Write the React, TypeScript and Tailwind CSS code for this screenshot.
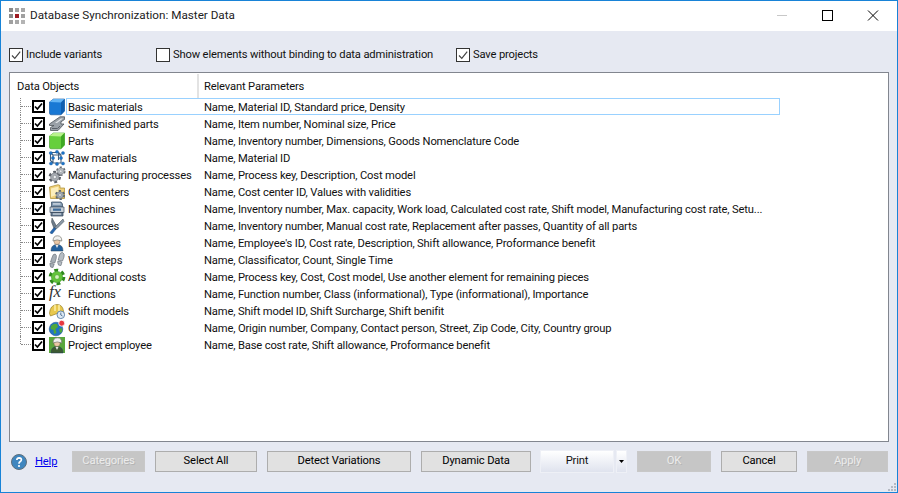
import type { ReactNode } from 'react'

function Svg({ children }: { children: ReactNode }) {
  return (
    <svg width="16" height="16" viewBox="0 0 16 16" className="block overflow-visible">
      {children}
    </svg>
  )
}

function Cube({ light, mid, dark, edge }: { light: string; mid: string; dark: string; edge: string }) {
  return (
    <Svg>
      <path d="M.5 3 L4.5 0 H15.5 V12 L12 15.8 H2 Q.5 15.8 .5 14 Z" fill={mid} stroke={edge} strokeWidth=".6" />
      <path d="M.5 3 L4.5 0 H15.5 L12 3.5 Z" fill={light} />
      <path d="M12 3.5 L15.5 0 V12 L12 15.8 Z" fill={dark} />
    </Svg>
  )
}

function GearShape({ cx, cy, r, fill, hole, stroke }: { cx: number; cy: number; r: number; fill: string; hole: string; stroke: string }) {
  return (
    <g>
      <circle cx={cx} cy={cy} r={r * 0.98} fill="none" stroke={stroke} strokeWidth={r * 0.42} strokeDasharray={`${r * 0.55} ${r * 0.5}`} />
      <circle cx={cx} cy={cy} r={r * 0.8} fill={fill} stroke={stroke} strokeWidth=".5" />
      <circle cx={cx} cy={cy} r={r * 0.32} fill={hole} stroke={stroke} strokeWidth=".4" />
    </g>
  )
}

function Person({ body, face }: { body: string; face: string }) {
  return (
    <>
      <path d="M2 16 Q2 9.5 8 9.5 Q14 9.5 14 16 Z" fill={body} stroke="#1e3c5a" strokeWidth=".5" />
      <path d="M6.5 10 L8 13 L9.5 10 Z" fill="#e8e8e8" />
      <circle cx="8" cy="6.5" r="3" fill={face} stroke="#7a5b3f" strokeWidth=".4" />
      <path d="M4 6 Q4 .8 8.5 .8 Q12.8 .8 12.8 6 Q8 3.8 4 6 Z" fill="#f1f1ef" stroke="#77776f" strokeWidth=".7" />
    </>
  )
}

const icons: Record<string, ReactNode> = {
  'Basic materials': <Cube light="#63b4f4" mid="#1878d4" dark="#0f5eb0" edge="#0d4f98" />,
  'Semifinished parts': (
    <Svg>
      <path d="M.5 8 L11 .8 H15.5 V3.5 L12 5.8 V8 L15 8 L9 14.5 H1.5 V11.5 L5 9.5 H.5 Z" fill="#9aa1a8" stroke="#4f555c" strokeWidth=".8" />
      <path d="M6 7 L12 2.5 H14 L8 7 Z" fill="#e1e4e7" />
      <path d="M3 12.5 H8.5 L11 10" fill="none" stroke="#5a6068" strokeWidth="1" />
    </Svg>
  ),
  Parts: <Cube light="#b9f28c" mid="#66cf3c" dark="#3fa824" edge="#3b9a22" />,
  'Raw materials': (
    <Svg>
      <g fill="none" stroke="#43607f" strokeWidth="1.1">
        <path d="M4 5 H12 V13 H4 Z M1.5 2.5 H9.5 M1.5 2.5 V10.5 L4 13 M1.5 2.5 L4 5 M9.5 2.5 L12 5 M9.5 2.5 V10" />
      </g>
      <g fill="#1c74c9" stroke="#0f4c8a" strokeWidth=".3">
        <circle cx="8" cy="1.8" r="1.6" />
        <circle cx="1.8" cy="3" r="1.6" />
        <circle cx="14" cy="3" r="1.6" />
        <circle cx="4" cy="8" r="1.6" />
        <circle cx="12" cy="8" r="1.6" />
        <circle cx="2" cy="13.5" r="1.6" />
        <circle cx="8" cy="14" r="1.6" />
        <circle cx="14" cy="13.5" r="1.6" />
      </g>
    </Svg>
  ),
  'Manufacturing processes': (
    <Svg>
      <GearShape cx={5.8} cy={10} r={5.2} fill="#a9aeb4" hole="#eef0f2" stroke="#5c6168" />
      <GearShape cx={11.8} cy={4.2} r={4} fill="#bcc1c6" hole="#f2f3f4" stroke="#666b72" />
    </Svg>
  ),
  'Cost centers': (
    <Svg>
      <path d="M.5 3 L9 .7 L11 1.5 V4 H15.5 V14.5 H1.5 Z" fill="#efd078" stroke="#a98a2c" strokeWidth=".7" />
      <path d="M2 4.5 L9.5 2.5 V10 L2 13 Z" fill="#fbeebc" />
      <GearShape cx={11} cy={11} r={4.2} fill="#a4adb6" hole="#e9edf0" stroke="#5c6670" />
    </Svg>
  ),
  Machines: (
    <Svg>
      <path d="M2.5 1 H12 L13.5 3 V6 H2.5 Z" fill="#7d95ad" stroke="#33485e" strokeWidth=".7" />
      <path d="M4 2.3 H11.5 V3.6 H4 Z" fill="#d8e0e8" />
      <path d="M1 6 H15 V11.5 H1 Z" fill="#c6ced6" stroke="#3d4f62" strokeWidth=".7" />
      <path d="M4 7.5 H12 V9.8 H4 Z" fill="#3f6d9c" />
      <path d="M2 11.5 H14 V15 H2 Z" fill="#6d8298" stroke="#2f4053" strokeWidth=".7" />
      <path d="M4 13 H12" stroke="#e6ebf0" strokeWidth="1" />
    </Svg>
  ),
  Resources: (
    <Svg>
      <path d="M3 0 L7.2 7.5 L5 10.5 L2.5 4 Z" fill="#6e7c8a" stroke="#38444f" strokeWidth=".5" />
      <path d="M14 1 L7 8 L5.5 11 L8 10.5 L15 3.5 Z" fill="#8a98a5" stroke="#38444f" strokeWidth=".5" />
      <path d="M5 9.5 L1 14.5 Q1.5 16 3.5 15.6 L7 11 Z" fill="#2566ae" stroke="#143f70" strokeWidth=".4" />
    </Svg>
  ),
  Employees: (
    <Svg>
      <Person body="#23609c" face="#e9c7a5" />
    </Svg>
  ),
  'Work steps': (
    <Svg>
      <path d="M3 5.5 Q4 1.5 6.2 2 Q8 2.8 7.2 6.5 L5.8 11 L1.5 10 Z" fill="#a6aeb6" stroke="#5f6870" strokeWidth=".6" />
      <path d="M1 11 L5.2 12 L4 15.5 Q1 16 1 13 Z" fill="#a6aeb6" stroke="#5f6870" strokeWidth=".6" />
      <path d="M10.5 3 Q11.5 0 13.5 .5 Q16 1.5 15 5 L13.5 9 L9.2 8 Z" fill="#b6bdc4" stroke="#5f6870" strokeWidth=".6" />
      <path d="M8.8 9 L13 10 L12 13.5 Q8.8 14 8.8 11 Z" fill="#b6bdc4" stroke="#5f6870" strokeWidth=".6" />
    </Svg>
  ),
  'Additional costs': (
    <Svg>
      <GearShape cx={8} cy={8} r={7} fill="#63c43a" hole="#d5f2bd" stroke="#2f8a1c" />
    </Svg>
  ),
  'Shift models': (
    <Svg>
      <path d="M.5 10.5 Q1 2 8 1.5 Q13.5 1.5 14.5 8 L15 11 L8 10.5 L1.5 13 Z" fill="#e8c84e" stroke="#977f24" strokeWidth=".7" />
      <path d="M6 2 V8 M10 2 V8" stroke="#fbeea8" strokeWidth="1.5" />
      <circle cx="11.8" cy="11.8" r="3.8" fill="#dfeaf5" stroke="#5a7fa6" strokeWidth=".9" />
      <path d="M11.8 9.5 V12 L13.5 13" stroke="#34587e" strokeWidth=".8" fill="none" />
    </Svg>
  ),
  Origins: (
    <Svg>
      <circle cx="7" cy="9" r="6.8" fill="#2173c2" stroke="#174f8a" strokeWidth=".5" />
      <path d="M2 6 Q5 3 8 4 L9 7 L6.5 9 L7.5 13 L5 14 L4.5 10 L1.5 9 Z" fill="#4fa83a" />
      <path d="M10 9 L13 8 L13 12 L11 13 Z" fill="#4fa83a" />
      <circle cx="12.7" cy="3.2" r="3" fill="#e8373f" stroke="#fff" strokeWidth=".8" />
    </Svg>
  ),
  'Project employee': (
    <Svg>
      <path d="M0 0 H16 V16 H0 Z" fill="#5aa63c" />
      <Person body="#3d5a33" face="#e9c7a5" />
    </Svg>
  ),
}

const rows = [
  ['Basic materials', 'Name, Material ID, Standard price, Density'],
  ['Semifinished parts', 'Name, Item number, Nominal size, Price'],
  ['Parts', 'Name, Inventory number, Dimensions, Goods Nomenclature Code'],
  ['Raw materials', 'Name, Material ID'],
  ['Manufacturing processes', 'Name, Process key, Description, Cost model'],
  ['Cost centers', 'Name, Cost center ID, Values with validities'],
  ['Machines', 'Name, Inventory number, Max. capacity, Work load, Calculated cost rate, Shift model, Manufacturing cost rate, Setu...'],
  ['Resources', 'Name, Inventory number, Manual cost rate, Replacement after passes, Quantity of all parts'],
  ['Employees', "Name, Employee's ID, Cost rate, Description, Shift allowance, Proformance benefit"],
  ['Work steps', 'Name, Classificator, Count, Single Time'],
  ['Additional costs', 'Name, Process key, Cost, Cost model, Use another element for remaining pieces'],
  ['Functions', 'Name, Function number, Class (informational), Type (informational), Importance'],
  ['Shift models', 'Name, Shift model ID, Shift Surcharge, Shift benifit'],
  ['Origins', 'Name, Origin number, Company, Contact person, Street, Zip Code, City, Country group'],
  ['Project employee', 'Name, Base cost rate, Shift allowance, Proformance benefit'],
]

function Box({ checked }: { checked: boolean }) {
  return (
    <span className="flex h-[14px] w-[14px] shrink-0 items-center justify-center border border-[#333] bg-white">
      {checked && (
        <svg width="12" height="12" viewBox="0 0 12 12">
          <path d="M2 6.5 L4.8 9.3 L10.2 2.6" fill="none" stroke="#444" strokeWidth="1.2" />
        </svg>
      )}
    </span>
  )
}

function TreeBox() {
  return (
    <span className="flex h-[13px] w-[13px] shrink-0 items-center justify-center border-2 border-black bg-white">
      <svg width="9" height="9" viewBox="0 0 9 9">
        <path d="M1 4.5 L3.4 7 L8 1.5" fill="none" stroke="#000" strokeWidth="1.7" />
      </svg>
    </span>
  )
}

function Btn({ label, w, ml, disabled }: { label: string; w: string; ml: string; disabled?: boolean }) {
  return (
    <div
      className={`flex h-[21px] shrink-0 items-center justify-center border pb-px ${w} ${ml} ${
        disabled
          ? 'border-[#c8c8c8] bg-[#c6c6c6] text-[#ececec] [text-shadow:1px_1px_0_#b4b4b4]'
          : 'border-[#adadad] bg-[#e1e1e1] text-black'
      }`}
    >
      {label}
    </div>
  )
}

function TitleIcon() {
  const cells = ['#8a8a8a', '#a0a0a0', '#a8a8a8', '#8a8a8a', '#9e1b22', '#a0a0a0', '#a0a0a0', '#a8a8a8', '#b4b4b4']
  return (
    <div className="grid h-[16px] w-[16px] grid-cols-3 gap-[2px]">
      {cells.map((c, i) => (
        <svg key={i} width="4" height="4" className="block">
          <rect width="4" height="4" fill={c} />
        </svg>
      ))}
    </div>
  )
}

export default function App() {
  return (
    <div className="relative flex h-[493px] w-[898px] flex-col border border-[#1883d7] bg-[#e6e9f2] font-['Roboto',sans-serif] text-[11.2px] tracking-[-0.15px] text-[#111]">
      <div className="flex h-[30px] shrink-0 items-center bg-white pl-[8px] text-[#222]">
        <TitleIcon />
        <span className="ml-[5px] text-[11.7px] tracking-normal">Database Synchronization: Master Data</span>
        <svg width="102" height="12" viewBox="0 0 102 12" className="ml-auto mr-[18px]">
          <path d="M0 5.5 H10" stroke="#c8c8c8" />
          <rect x="45.5" y=".5" width="10" height="10" fill="none" stroke="#000" />
          <path d="M91 .5 L101 10.5 M101 .5 L91 10.5" stroke="#000" />
        </svg>
      </div>
      <div className="flex h-[41px] shrink-0 items-center whitespace-nowrap pl-[8px] pt-[6px]">
        <Box checked />
        <span className="ml-[3px] w-[130px] pt-[2px]">Include variants</span>
        <Box checked={false} />
        <span className="ml-[3px] w-[283px] pt-[2px]">Show elements without binding to data administration</span>
        <Box checked />
        <span className="ml-[3px] pt-[2px]">Save projects</span>
      </div>
      <div className="mx-[8px] flex h-[370px] shrink-0 flex-col border border-[#82868f] bg-white">
        <div className="flex h-[25px] shrink-0 items-center">
          <span className="w-[187px] pl-[7px] pt-[3px]">Data Objects</span>
          <span className="h-[24px] border-l-2 border-[#e3e3e3] pl-[5px] leading-[25px]">Relevant Parameters</span>
        </div>
        {rows.map(([name, params], i) => (
          <div key={name} className="flex h-[17px] shrink-0 items-center pl-[10px]">
            <span className={`w-[12px] shrink-0 self-start border-l border-dotted border-[#888] ${i === rows.length - 1 ? 'h-[8px]' : 'h-[17px]'}`}>
              <span className="mt-[8px] block h-0 w-[10px] border-t border-dotted border-[#888]" />
            </span>
            <TreeBox />
            <span className="ml-[4px] w-[17px] shrink-0">
              {name === 'Functions' ? (
                <span className="font-['Liberation_Serif',serif] text-[17px] italic leading-[16px] text-[#333]">fx</span>
              ) : (
                icons[name]
              )}
            </span>
            <div className={`flex h-[17px] w-[714px] shrink-0 items-start border pl-px leading-[17px] ${i === 0 ? 'border-[#99d1ff]' : 'border-transparent'}`}>
              <span className="w-[136px] shrink-0 whitespace-nowrap">{name}</span>
              <span className="whitespace-nowrap">{params}</span>
            </div>
          </div>
        ))}
      </div>
      <div className="flex items-center pl-[10px] pt-[8px]">
        <svg width="16" height="16" viewBox="0 0 16 16" className="shrink-0">
          <circle cx="8" cy="8" r="7.5" fill="#3f86bf" stroke="#5e6f7c" />
          <path d="M5.8 6 Q6 3.8 8.2 3.8 Q10.4 3.9 10.4 5.8 Q10.3 7 9 7.8 Q8 8.4 8 9.8" fill="none" stroke="#fff" strokeWidth="1.7" />
          <circle cx="8" cy="12" r="1.1" fill="#fff" />
        </svg>
        <span className="ml-[8px] w-[37px] shrink-0 pt-[2px] text-[#0000ee] underline">Help</span>
        <Btn label="Categories" w="w-[73px]" ml="ml-0" disabled />
        <Btn label="Select All" w="w-[102px]" ml="ml-[10px]" />
        <Btn label="Detect Variations" w="w-[144px]" ml="ml-[10px]" />
        <Btn label="Dynamic Data" w="w-[110px]" ml="ml-[10px]" />
        <div className="ml-[9px] flex h-[23px] w-[74px] shrink-0 items-center justify-center border border-[#eef0f6] bg-gradient-to-b from-white to-[#dfe3ee]">Print</div>
        <div className="ml-[2px] flex h-[23px] w-[11px] shrink-0 items-center justify-center border border-[#eef0f6] bg-gradient-to-b from-white to-[#dfe3ee]">
          <svg width="5" height="3" viewBox="0 0 5 3"><path d="M0 0 H5 L2.5 3 Z" fill="#000" /></svg>
        </div>
        <Btn label="OK" w="w-[74px]" ml="ml-[10px]" disabled />
        <Btn label="Cancel" w="w-[76px]" ml="ml-[10px]" />
        <Btn label="Apply" w="w-[81px]" ml="ml-[10px]" disabled />
      </div>
      <svg width="9" height="9" viewBox="0 0 9 9" className="absolute bottom-0 right-0">
        <g fill="#b5b9c2">
          <rect x="6" y="0" width="2" height="2" />
          <rect x="3" y="3" width="2" height="2" />
          <rect x="6" y="3" width="2" height="2" />
          <rect x="0" y="6" width="2" height="2" />
          <rect x="3" y="6" width="2" height="2" />
          <rect x="6" y="6" width="2" height="2" />
        </g>
      </svg>
    </div>
  )
}
